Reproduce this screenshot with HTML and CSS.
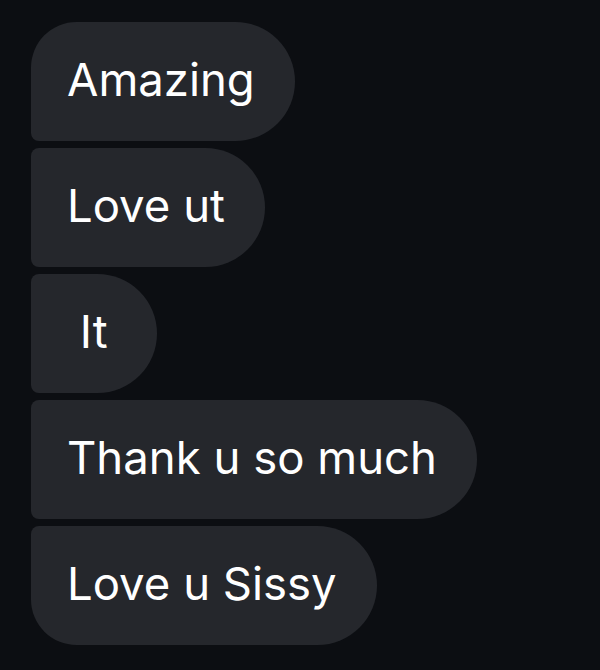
FILE: index.html
```html
<!DOCTYPE html>
<html lang="en">

<head>
    <meta charset="UTF-8">
    <meta name="viewport" content="width=device-width, initial-scale=1.0">
    <title>Messages</title>
    <link rel="stylesheet" href="styles.css">
</head>

<body>
    <div class="thread">
        <div class="bubble first">Amazing</div>
        <div class="bubble">Love ut</div>
        <div class="bubble short"> It</div>
        <div class="bubble">Thank u so much</div>
        <div class="bubble last">Love u Sissy</div>
    </div>
</body>

</html>
```

FILE: styles.css
```css
body {
    font-family: Inter, "Noto Sans", sans-serif;
    margin: 0;
    background-color: #0c0e12;
}

.thread {
    display: flex;
    flex-direction: column;
    align-items: flex-start;
    gap: 7px;
    padding: 22px 0 0 31px;
}

.bubble {
    display: flex;
    align-items: center;
    height: 119px;
    box-sizing: border-box;
    padding: 0 40px 4px 36px;
    background-color: #25272c;
    color: #ffffff;
    font-size: 45.5px;
    white-space: pre;
    border-radius: 8px 60px 60px 8px;
}

.bubble.first {
    border-top-left-radius: 46px;
}

.bubble.last {
    border-bottom-left-radius: 46px;
}

.bubble.short {
    min-width: 126px;
}
```
